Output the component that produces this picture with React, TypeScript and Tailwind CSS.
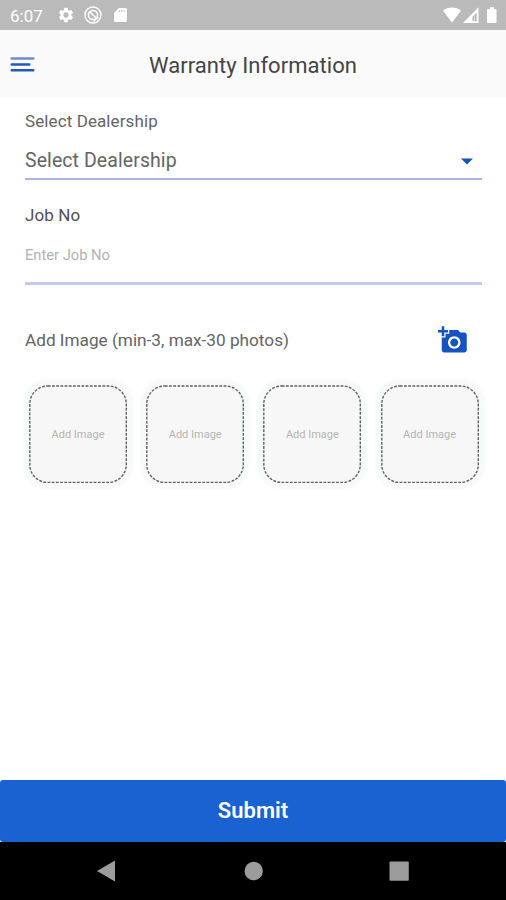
import { MdAddAPhoto, MdSettings } from 'react-icons/md';

const photoSlots = [1, 2, 3, 4];

function StatusBar() {
  return (
    <div className="h-[30px] bg-[#bababa] flex items-center justify-between pl-[10px] pr-[8px] text-white">
      <div className="flex items-center">
        <span className="w-[47px] text-[17px] leading-none pt-[2px]">6:07</span>
        <MdSettings className="w-[18px] h-[18px]" />
        <svg className="w-[18px] h-[18px] ml-[9px]" viewBox="0 0 18 18" fill="none" stroke="currentColor">
          <circle cx="9" cy="9" r="8" strokeWidth="1.4" />
          <circle cx="9" cy="9" r="4.6" strokeWidth="1.5" />
          <path d="M5.7 5.7l6.6 6.6" strokeWidth="1.5" />
          <path d="M9.5 15.5l5-4" strokeWidth="1.3" />
        </svg>
        <svg className="w-[14px] h-[16px] ml-[12px]" viewBox="0 0 14 16">
          <path d="M5 1h6.5q1.500 0 1.500 1.500v11q0 1.500-1.500 1.500h-10Q0 15 0 13.500V6z" fill="currentColor" />
          <path d="M5.500 3v2M7.700 3v2M10 3v2" stroke="#cccccc" strokeWidth="1.2" />
        </svg>
      </div>
      <svg className="w-[56px] h-[18px]" viewBox="0 0 56 18" fill="currentColor">
        <path d="M1 4.8C3.5 2.6 6.5 1.5 10 1.5s6.500 1.100 9 3.300L10 16.500z" />
        <path d="M36.500 1.300v15.700H21z" />
        <path d="M34.700 6.500v8.800h-4.200v-4.600z" fill="#bababa" />
        <path d="M32.500 9.500v5.800" stroke="#dedede" strokeWidth="1" />
        <path d="M47 3h1V1.200h4V3h1.500q1 0 1 1v12q0 1-1 1h-7.500q-1 0-1-1V4q0-1 1-1z" />
      </svg>
    </div>
  );
}

function Header() {
  return (
    <header className="h-[67px] bg-[#fafafa] relative flex items-center justify-center">
      <svg className="absolute left-[10px] top-[26px] w-[25px] h-[17px]" viewBox="0 0 25 17" strokeLinecap="round" strokeWidth="2.4">
        <path d="M1.7 2.500h21.600" stroke="#7189d3" />
        <path d="M1.7 8.500h17.600M1.700 14.200h21.600" stroke="#2257bd" />
      </svg>
      <h1 className="text-[22px] leading-none text-[#444444] pt-[4px] tracking-[0.04px]">Warranty Information</h1>
    </header>
  );
}

function PhotoSlot() {
  return (
    <div className="w-[98px] h-[98px] relative flex items-center justify-center rounded-[18px] bg-[#f7f7f7] shadow-[0_0_3px_6px_#f8f9f9]">
      <svg className="absolute inset-0 w-full h-full" viewBox="0 0 98 98" fill="none">
        <rect x="0.8" y="1" width="96.5" height="96.5" rx="18" stroke="#606060" strokeWidth="1.4" strokeDasharray="2.8 1.4" />
      </svg>
      <span className="text-[11px] leading-none text-[#b4b4b4]">Add Image</span>
    </div>
  );
}

export default function App() {
  return (
    <div className="w-full h-screen flex flex-col overflow-hidden bg-white font-[Roboto,sans-serif]">
      <StatusBar />
      <Header />

      {/* Warranty form */}
      <main className="flex-1 pl-[25px] pr-[24px]">
        <div className="h-[83px] border-b-2 border-[#a9b6e3]">
          <div className="pt-[14px] text-[17px] leading-[20px] tracking-[0.1px] text-[#646464]">Select Dealership</div>
          <div className="mt-[19px] flex items-center justify-between text-[19.5px] leading-[22px] tracking-[0.08px] text-[#646464]">
            <span>Select Dealership</span>
            <svg className="w-[12px] h-[7px] mr-[9px]" viewBox="0 0 12 7" fill="#1453bd">
              <path d="M0 0.5h12L6 6.5z" />
            </svg>
          </div>
        </div>

        <div className="h-[105px] border-b-[3px] border-[#c3cbec]">
          <div className="pt-[25px] text-[17px] leading-[20px] tracking-[0.1px] text-[#505050]">Job No</div>
          <div className="mt-[21px] text-[14.7px] leading-[18px] text-[#b2b2b2]">Enter Job No</div>
        </div>

        <div className="mt-[40px] h-[30px] flex items-center justify-between pr-[14px]">
          <span className="text-[17.2px] leading-[20px] text-[#646464]">Add Image (min-3, max-30 photos)</span>
          <MdAddAPhoto className="w-[30px] h-[30px] text-[#1552c4]" />
        </div>

        <div className="mt-[30px] ml-[4px] flex gap-[19.2px]">
          {photoSlots.map((slot) => (
            <PhotoSlot key={slot} />
          ))}
        </div>
      </main>

      <button className="h-[62px] rounded-[3px] bg-[#1a61d2] text-white text-[22px] font-semibold leading-none">Submit</button>

      {/* Android navigation */}
      <nav className="h-[58px] bg-black">
        <svg className="w-[506px] h-[58px]" viewBox="0 0 506 58" fill="#9c9c9c">
          <path d="M97 29l18-10.5v21z" />
          <circle cx="253.7" cy="29" r="9.2" />
          <rect x="389.5" y="19.5" width="19.3" height="19.3" rx="1" />
        </svg>
      </nav>
    </div>
  );
}
